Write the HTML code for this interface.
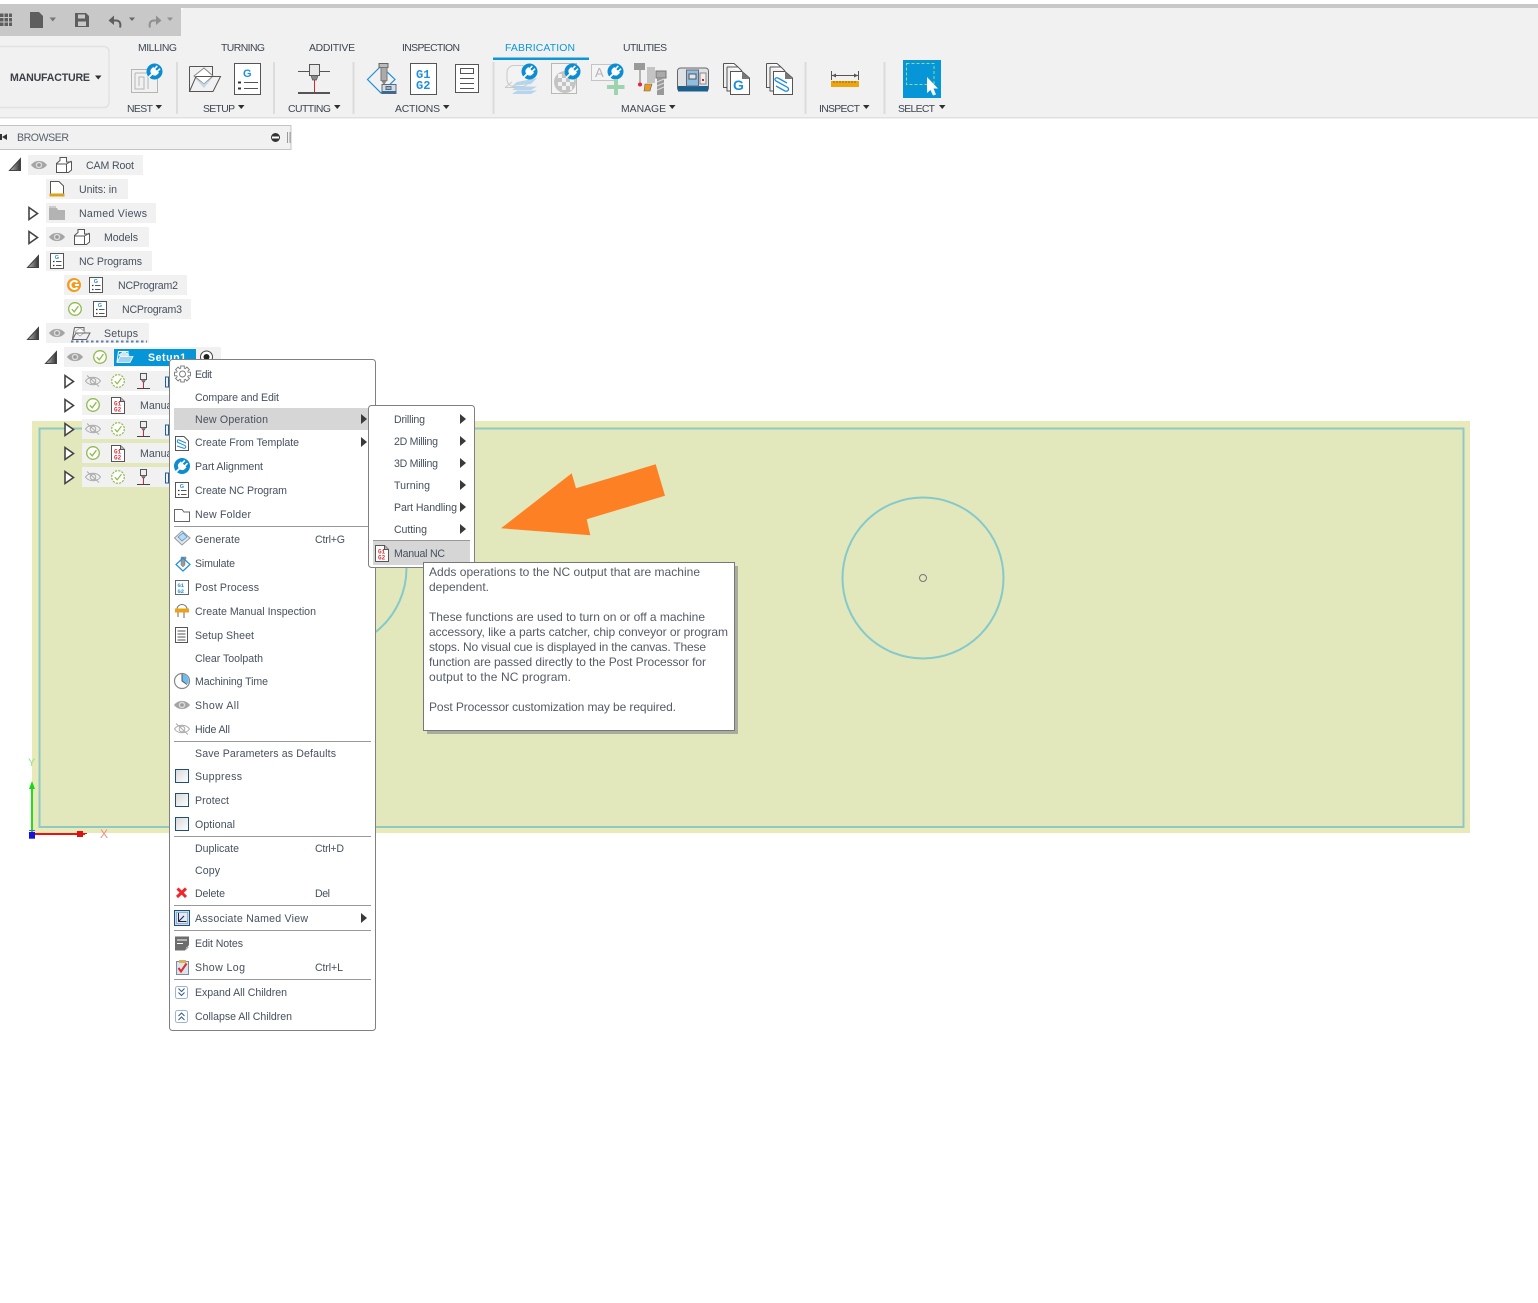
<!DOCTYPE html>
<html><head><meta charset="utf-8"><style>
html,body{margin:0;padding:0;background:#fff;overflow:hidden}
svg{display:block}
text{font-family:"Liberation Sans",Arial,sans-serif;font-size:10.6px;fill:#46505e}
.tab{font-size:10.4px;fill:#3d4550}
.tip{font-size:12px;fill:#555b66}
.gc{font-family:"Liberation Mono",monospace;font-weight:bold;fill:#d8333a}
.gb{font-family:"Liberation Mono",monospace;font-weight:bold;fill:#1f8fdc}
</style></head><body>
<svg xmlns="http://www.w3.org/2000/svg" width="1538" height="1303" viewBox="0 0 1538 1303">
<defs>
<linearGradient id="tg" x1="0" y1="0" x2="1" y2="0"><stop offset="0" stop-color="#bbb"/><stop offset="1" stop-color="#333"/></linearGradient>
<linearGradient id="cb" x1="0" y1="0" x2="1" y2="1"><stop offset="0" stop-color="#d8d8d8"/><stop offset="1" stop-color="#fff"/></linearGradient>
<g id="to"><path d="M0.5 12.5H11.5V0.5Z" fill="url(#tg)" stroke="#444"/></g>
<g id="tc"><path d="M1 0.5L9.5 6.5L1 12.5Z" fill="#fff" stroke="#444" stroke-width="1.6"/></g>
<g id="eye"><path d="M0 6C4 0.5 12 0.5 16 6C12 11.5 4 11.5 0 6Z" fill="#a5a5a5"/><circle cx="8" cy="6" r="3.2" fill="#dcdcdc"/><circle cx="8" cy="6" r="1.8" fill="#999"/></g>
<g id="eyeoff" fill="none" stroke="#aaa"><path d="M0.5 6C4 1 12 1 15.5 6C12 11 4 11 0.5 6Z"/><circle cx="8" cy="6" r="2.8"/><path d="M2 0.5L14 11.5"/></g>
<g id="chk"><circle cx="7" cy="7" r="6.3" fill="#fff" stroke="#8fbb4a" stroke-width="1.3"/><path d="M3.8 7.2L6.2 9.8L10.4 4.2" fill="none" stroke="#8fbb4a" stroke-width="1.3"/></g>
<g id="chkd"><circle cx="7" cy="7" r="6.3" fill="#fff" stroke="#8fbb4a" stroke-width="1.2" stroke-dasharray="2.2 1.1"/><path d="M3.8 7.2L6.2 9.8L10.4 4.2" fill="none" stroke="#8fbb4a" stroke-width="1.2"/></g>
<g id="tool"><rect x="3.5" y="0.5" width="6" height="6" fill="#eee" stroke="#555"/><path d="M4.5 6.5L5.5 9H7.5L8.5 6.5Z" fill="#888" stroke="#555" stroke-width=".6"/><path d="M6.5 9V15" stroke="#d23" stroke-width="1"/><path d="M0 15.5H13" stroke="#444" stroke-width="1"/></g>
<g id="cube" fill="#fff" stroke="#555"><path d="M0.5 15.5V6.5L4 3.5V0.5H10.5V5H15.5V13L12.500 15.5Z"/><path d="M.5 7H10.5V15.5M10.5 7L15.5 4" fill="none"/></g>
<g id="nc"><rect x=".5" y=".5" width="13" height="15" fill="#fff" stroke="#555"/><text x="4.7" y="5.8" style="font-size:5.5px;font-weight:bold;fill:#1f8fdc">G</text><path d="M3 8.5H4.5M3 12.5H4.5" stroke="#333" stroke-width="1.2"/><path d="M6 8.5H11.5M6 12.5H11.5" stroke="#555"/></g>
<g id="mn"><path d="M.5 .5H9.5L13.5 4.5V16.5H.5Z" fill="#fff" stroke="#555"/><path d="M9.5 .5V4.5H13.5" fill="#bbb" stroke="#555"/><text x="3" y="8.3" class="gc" style="font-size:6px">G1</text><text x="3" y="14.3" class="gc" style="font-size:6px">G2</text></g>
<g id="plug"><circle cx="8.5" cy="8.5" r="8" fill="#0b8dd3"/><g transform="rotate(45 8.5 8.5)" fill="#fff"><rect x="5.8" y="2.6" width="1.6" height="4"/><rect x="9.6" y="2.6" width="1.6" height="4"/><path d="M4.4 6.2H12.6V8.6C12.6 11 10.8 12.4 8.5 12.4C6.2 12.4 4.4 11 4.4 8.6Z"/><rect x="7.6" y="12" width="1.8" height="5.2"/></g></g>
<g id="cb0"><rect x=".5" y=".5" width="13" height="13" fill="url(#cb)" stroke="#1e4f80"/></g>
<g id="arr"><path d="M0 0L6 5L0 10Z" fill="#3a3a3a"/></g>
<g id="dn"><path d="M0 0H6.500L3.250 4Z" fill="#2f2f2f"/></g>
</defs>

<!-- ribbon -->
<rect width="1538" height="4" fill="#fff"/>
<rect y="4" width="1538" height="4" fill="#c8c8c8"/>
<rect y="8" width="181" height="28" fill="#c8c8c8"/>
<path d="M181 36V12Q181 8 185 8H1538V118H0V36Z" fill="#f1f1f1"/>
<rect y="117" width="1538" height="1.500" fill="#e0e0e0"/>

<!-- quick access -->
<g fill="#5e5e5e">
<path d="M0 13.500h3.500v3.500h-3.500zM4.500 13.500h3.500v3.500h-3.500zM9 13.500h3v3.500h-3zM0 18h3.500v3.500h-3.500zM4.500 18h3.500v3.500h-3.500zM9 18h3v3.500h-3zM0 22.500h3.500v3.500h-3.500zM4.500 22.500h3.500v3.500h-3.500zM9 22.500h3v3.500h-3z"/>
<path d="M30 12H39L43 16V28H30Z"/><path d="M49.500 17.500H56L52.800 21.500Z" fill="#777"/>
<path d="M75 13H86L89 16V27H75ZM78 14.500V18.500H85V14.500ZM78 21.500V26H86V21.500Z"/>
<path d="M129 17.500H135L132 21Z" fill="#666"/>
</g>
<path d="M110 20.500H116C120 20.500 121 24 120 27.500" fill="none" stroke="#5e5e5e" stroke-width="2"/><path d="M114 15.500L108.500 20.500L114 25Z" fill="#5e5e5e"/>
<path d="M160 20.500H154C150 20.500 149 24 150 27.500" fill="none" stroke="#8f8f8f" stroke-width="2"/><path d="M156 15.500L161.500 20.500L156 25Z" fill="#8f8f8f"/>
<path d="M167 17.500H173L170 21Z" fill="#909090"/>

<!-- manufacture -->
<rect x="-4" y="46.500" width="113" height="61" rx="5" fill="#f1f1f1" stroke="#e2e2e2" stroke-width="1.500"/>
<text x="10" y="81" textLength="80" style="font-weight:bold;font-size:10.600px;fill:#3a3f48">MANUFACTURE</text>
<use href="#dn" x="95" y="75.500"/>

<!-- tabs -->
<text class="tab" x="138" y="51" textLength="39">MILLING</text>
<text class="tab" x="221" y="51" textLength="44">TURNING</text>
<text class="tab" x="309" y="51" textLength="46">ADDITIVE</text>
<text class="tab" x="402" y="51" textLength="58">INSPECTION</text>
<text class="tab" x="505" y="51" textLength="70" style="fill:#0c96d8">FABRICATION</text>
<text class="tab" x="623" y="51" textLength="44">UTILITIES</text>
<rect x="493" y="57.500" width="96" height="2.500" fill="#0c96d8"/>

<g fill="#dcdcdc">
<rect x="176" y="62" width="2" height="52"/><rect x="273" y="62" width="2" height="52"/><rect x="352.500" y="62" width="2" height="52"/><rect x="492.500" y="62" width="2" height="52"/><rect x="804.500" y="62" width="2" height="52"/><rect x="883.500" y="62" width="2" height="52"/>
</g>

<g class="lbl">
<text class="tab" x="127" y="112" textLength="26">NEST</text><use href="#dn" x="155.500" y="105"/>
<text class="tab" x="203" y="112" textLength="32">SETUP</text><use href="#dn" x="238" y="105"/>
<text class="tab" x="288" y="112" textLength="43">CUTTING</text><use href="#dn" x="334" y="105"/>
<text class="tab" x="395" y="112" textLength="45">ACTIONS</text><use href="#dn" x="443" y="105"/>
<text class="tab" x="621" y="112" textLength="45">MANAGE</text><use href="#dn" x="669" y="105"/>
<text class="tab" x="819" y="112" textLength="41">INSPECT</text><use href="#dn" x="863" y="105"/>
<text class="tab" x="898" y="112" textLength="37">SELECT</text><use href="#dn" x="939" y="105"/>
</g>

<!-- nest -->
<g fill="none" stroke="#b5b5b5" stroke-width="1"><path d="M131.500 69.500H157.500V92.500H131.500ZM135 73H148V89M135 73V89H144V77H139V86"/></g>
<use href="#plug" x="146" y="63"/>
<!-- setup folder -->
<path d="M189.500 66.500H212.500V76" fill="none" stroke="#555"/><path d="M189.500 66.500V91.500" stroke="#555"/>
<path d="M194 76L204 68L213 76L204 84Z" fill="#fff" stroke="#888"/><path d="M194 77L204 84L213 77L204 88Z" fill="#c2d8ea"/>
<path d="M189.500 91.500L196 76.500H220.500L213 91.500Z" fill="none" stroke="#555"/>
<!-- G doc -->
<rect x="234.500" y="63.500" width="26" height="31" fill="#fff" stroke="#555"/>
<text x="243" y="77" style="font-size:11px;font-weight:bold;fill:#1f8fdc">G</text>
<path d="M238 82.500H241M238 88.500H241" stroke="#333" stroke-width="2"/><path d="M244 82.500H258M244 88.500H258" stroke="#555"/>
<!-- cutting -->
<path d="M298 71.500H330" stroke="#555"/>
<rect x="309.500" y="64.500" width="10" height="11" fill="#e8e8e8" stroke="#555"/>
<path d="M311 75.500L312.500 80H316.500L318 75.500Z" fill="#888" stroke="#555" stroke-width=".7"/>
<path d="M314.500 80V92" stroke="#d8262c"/><path d="M298 93H330" stroke="#555" stroke-width="2"/>
<!-- actions -->
<path d="M381 66L367.500 79.500L381 93L395 79.500Z" fill="none" stroke="#1f8fdc" stroke-width="1.200"/>
<rect x="379" y="63.500" width="9" height="4" fill="#bbb" stroke="#666"/><rect x="381" y="67.500" width="6" height="13" fill="#aaa" stroke="#777"/><path d="M381 80.500L384 85L387 80.500Z" fill="#888"/>
<rect x="382" y="84.500" width="14" height="9" fill="#d3dde5" stroke="#667"/><rect x="382" y="91" width="14" height="2.500" fill="#3a6a94"/><rect x="386" y="86.500" width="5" height="3" fill="#8cb6d8" stroke="#567"/>
<rect x="410.500" y="63.500" width="26" height="31" fill="#fff" stroke="#555"/>
<text x="416" y="78" class="gb" style="font-size:12px">G1</text><text x="416" y="89" class="gb" style="font-size:12px">G2</text>
<rect x="455.500" y="64.500" width="23" height="28" fill="#fff" stroke="#555"/><rect x="460.500" y="68.500" width="13" height="5" fill="none" stroke="#555"/>
<path d="M460 78.500H474M460 83.500H474M460 88.500H474" stroke="#555"/>
<!-- manage -->
<rect x="507" y="65.500" width="22" height="21" rx="7" fill="#f3f3f3" stroke="#c9c9c9"/><path d="M505 87.500L512 82" stroke="#c9c9c9"/><path d="M505 87.500H520" stroke="#c9c9c9"/>
<path d="M517 82L537 78L531 84L512 86Z M517 86.500H537L531 90H512Z M517 90.500H537L531 94H512Z" fill="#b7d5ea"/>
<use href="#plug" x="521" y="63"/>
<rect x="551.500" y="63.500" width="25" height="30" fill="#f4f4f4" stroke="#b8b8b8"/>
<circle cx="565" cy="82" r="11" fill="#c4c4c4"/><path d="M558 74h4v4h-4zM566 74h4v4h-4zM562 78h4v4h-4zM570 78h4v4h-4zM558 82h4v4h-4zM566 82h4v4h-4zM562 86h4v4h-4zM570 86h2v4h-2z" fill="#f1f1f1"/>
<use href="#plug" x="564" y="63"/>
<rect x="591.500" y="64.500" width="24" height="16" fill="#f4f4f4" stroke="#c4c4c4"/>
<text x="595" y="77" style="font-size:13px;fill:#b5b5b5">A</text>
<use href="#plug" x="607" y="63"/>
<path d="M614 79h4v6h6.500v4H618v6h-4v-6h-7v-4h7z" fill="#9dd3ad"/>
<rect x="634" y="63" width="11" height="7" fill="#9a9a9a"/><path d="M640 70V83" stroke="#777"/><circle cx="640" cy="84.500" r="2" fill="#ee2233"/>
<rect x="647" y="67" width="8" height="16" fill="#c4c4c4"/>
<rect x="656" y="71" width="10" height="7" fill="#aaa" stroke="#777"/><rect x="657" y="78" width="7" height="17" fill="#999"/><path d="M657 82l7-3M657 86l7-3M657 90l7-3" stroke="#ddd"/>
<path d="M645 84L652 84L650 91H644Z" fill="#e89a1e" stroke="#666" stroke-width=".6"/>
<rect x="677.500" y="68" width="31" height="23" rx="3" fill="#dfe2e5" stroke="#666"/><rect x="678" y="86" width="30" height="5.500" fill="#1c5f8c"/>
<rect x="686.500" y="70" width="12" height="16" fill="#8fbde0" stroke="#667"/><rect x="689" y="74" width="7" height="5" fill="#dbe8f2" stroke="#555"/>
<rect x="700" y="73" width="6" height="11" fill="#eee" stroke="#888"/><rect x="702" y="79" width="2" height="2" fill="#c22"/>
<path d="M723.500 63.500H734L738 67M727 67H738L742 71M730.500 71.500H742L749.500 78V94.500H730.500Z" fill="#fff" stroke="#555"/><path d="M723.500 63.500V87.500H727M727 67V91H730.500" fill="none" stroke="#555"/>
<path d="M742 71.500L749.500 79H742Z" fill="#777"/>
<text x="733" y="90" style="font-size:14px;font-weight:bold;fill:#1f8fdc">G</text>
<path d="M766.500 63.500H777L781 67M770 67H781L785 71M773.500 71.500H785L792.500 78V94.500H773.500Z" fill="#fff" stroke="#555"/><path d="M766.500 63.500V87.500H770M770 67V91H773.500" fill="none" stroke="#555"/>
<path d="M785 71.500L792.500 79H785Z" fill="#777"/>
<path d="M787 83L778 78C775 77 774 80 776 81L787 87C790 89 788 92 785 91L776 86" fill="none" stroke="#1f8fdc" stroke-width="1.300"/>
<!-- inspect -->
<path d="M831.500 71V80M858.500 71V80M832 75.500H858" stroke="#555"/><path d="M832 75.500L836 73.500V77.500ZM858 75.500L854 73.500V77.500Z" fill="#555"/>
<rect x="831" y="81" width="28" height="6" fill="#eea40f"/><path d="M834 81v2M837 81v2M840 81v2M843 81v2M846 81v2M849 81v2M852 81v2M855 81v2" stroke="#8c6a10"/>
<!-- select -->
<rect x="903" y="60" width="38" height="38" fill="#0696d7"/>
<rect x="906.500" y="63.500" width="27.500" height="21" fill="none" stroke="#8fe08f" stroke-dasharray="3 2"/>
<path d="M927 77V93L930.500 90L933 95.500L936 94.500L933.500 88.500H938Z" fill="#fff"/>

<!-- canvas -->
<rect x="32" y="421" width="1438" height="412" fill="#e8ebb9"/>
<rect x="39.500" y="428.500" width="1424" height="398.500" fill="#e2e8bc" stroke="#8ec9c6" stroke-width="2"/>
<circle cx="923" cy="578" r="80.500" fill="none" stroke="#85c9cb" stroke-width="2"/>
<circle cx="923" cy="578" r="3.500" fill="#e2e8bc" stroke="#777"/>
<path d="M406 560A81 81 0 0 1 373 634" fill="none" stroke="#85c9cb" stroke-width="2"/>
<!-- axis -->
<path d="M32 833V786" stroke="#1fe01f" stroke-width="2"/><path d="M32 781L35 789H29Z" fill="#17d817"/>
<path d="M32 834H85" stroke="#ee1111" stroke-width="2"/><path d="M84 833.500H87" stroke="#ee1111"/><rect x="77" y="831" width="6" height="6" fill="#e01010"/>
<path d="M29 832H35V838H29Z" fill="#1414d8"/><path d="M29 830.500H35M29 838.500H35" stroke="#5a5aee"/>
<text x="28" y="766" style="font-size:11px;fill:#8fe08f">Y</text>
<text x="100" y="838" style="font-size:12px;fill:#f08a8a">X</text>

<!-- browser -->
<rect x="-2" y="125.500" width="293" height="24" fill="#f1f1f1" stroke="#c4c4c4"/>
<path d="M0 134H2V140H0ZM2 137L7 134V140Z" fill="#333"/>
<text x="17" y="141" textLength="52" style="fill:#59606c">BROWSER</text>
<circle cx="275.500" cy="137.500" r="4.500" fill="#333"/><rect x="272" y="136.500" width="7" height="2" fill="#fff"/>
<path d="M287.500 132V143M290 132V143" stroke="#999"/>

<g fill="#f1f1f1">
<rect x="28" y="155" width="115" height="20"/>
<rect x="46" y="179" width="82" height="20"/>
<rect x="46" y="203" width="110" height="20"/>
<rect x="46" y="227" width="103" height="20"/>
<rect x="46" y="251" width="106" height="20"/>
<rect x="64" y="275" width="123" height="20"/>
<rect x="64" y="299" width="127" height="20"/>
<rect x="46" y="323" width="103" height="20"/>
<rect x="64" y="347" width="157" height="20"/>
<rect x="82" y="371" width="100" height="20"/>
<rect x="82" y="395" width="100" height="20"/>
<rect x="82" y="419" width="100" height="20"/>
<rect x="82" y="443" width="100" height="20"/>
<rect x="82" y="467" width="100" height="20"/>
</g>

<use href="#to" x="9" y="158"/><use href="#eye" x="31" y="159"/><use href="#cube" x="56" y="157"/>
<text x="86" y="169" textLength="48">CAM Root</text>

<path d="M50.500 181.500H59L63.500 186V195.500H50.500Z" fill="#fff" stroke="#555"/><rect x="49.500" y="193.500" width="15" height="3" fill="#dba21c"/>
<text x="79" y="193" textLength="38">Units: in</text>

<use href="#tc" x="28" y="207"/>
<path d="M49 208H57L58 210H65V220H49Z" fill="#b3b3b3"/><rect x="49" y="206" width="7" height="2" fill="#ccc"/>
<text x="79" y="217" textLength="68">Named Views</text>

<use href="#tc" x="28" y="231"/><use href="#eye" x="49" y="231"/><use href="#cube" x="74" y="229"/>
<text x="104" y="241" textLength="34">Models</text>

<use href="#to" x="27" y="255"/><use href="#nc" x="50" y="253"/>
<text x="79" y="265" textLength="63">NC Programs</text>

<circle cx="74" cy="285" r="7" fill="#f59a1e"/><path d="M77.500 282.500A4 4 0 1 0 77.500 287.500" fill="none" stroke="#fff" stroke-width="2"/><path d="M75 284H79V286H75Z" fill="#fff"/>
<use href="#nc" x="89" y="277"/>
<text x="118" y="289" textLength="60">NCProgram2</text>

<use href="#chk" x="68" y="302"/><use href="#nc" x="93" y="301"/>
<text x="122" y="313" textLength="60">NCProgram3</text>

<use href="#to" x="27" y="327"/><use href="#eye" x="49" y="327"/>
<path d="M74.500 327.500H84V333M74.500 327.500L72.500 339" fill="none" stroke="#666"/>
<path d="M75 332L80 328L85 332L80 336Z" fill="#fff" stroke="#999" stroke-width=".7"/>
<path d="M72.500 339.500L76 333H90L86.500 339.500Z" fill="none" stroke="#666"/>
<path d="M71 341.500H147" stroke="#5f7ea4" stroke-width="2" stroke-dasharray="2.500 2.500"/>
<text x="104" y="337" textLength="34">Setups</text>

<use href="#to" x="45" y="351"/><use href="#eye" x="67" y="351"/><use href="#chk" x="93" y="350"/>
<rect x="114" y="349" width="82" height="17" fill="#0696d7"/>
<path d="M118.500 351.500H128V356M118.500 351.500L117 362" fill="none" stroke="#fff"/>
<path d="M119 355L124 351L129 355L124 359Z" fill="#cfe6f6" stroke="#fff" stroke-width=".6"/>
<path d="M117 362.500L120 356.500H133L130 362.500Z" fill="#9fd2f0" stroke="#fff" stroke-width=".8"/>
<text x="148" y="361" textLength="38" style="font-weight:bold;fill:#fff">Setup1</text>
<circle cx="206.500" cy="357" r="6" fill="#fff" stroke="#444"/><circle cx="206.500" cy="357" r="3" fill="#222"/>

<use href="#tc" x="64" y="375"/><use href="#eyeoff" x="85" y="375"/><use href="#chkd" x="111" y="374"/><use href="#tool" x="137" y="373"/><rect x="165.500" y="377" width="3" height="10" fill="none" stroke="#1e5f9a"/>
<use href="#tc" x="64" y="399"/><use href="#chk" x="86" y="398"/><use href="#mn" x="111" y="397"/><text x="140" y="409">Manual</text>
<use href="#tc" x="64" y="423"/><use href="#eyeoff" x="85" y="423"/><use href="#chkd" x="111" y="422"/><use href="#tool" x="137" y="421"/><rect x="165.500" y="425" width="3" height="10" fill="none" stroke="#1e5f9a"/>
<use href="#tc" x="64" y="447"/><use href="#chk" x="86" y="446"/><use href="#mn" x="111" y="445"/><text x="140" y="457">Manual</text>
<use href="#tc" x="64" y="471"/><use href="#eyeoff" x="85" y="471"/><use href="#chkd" x="111" y="470"/><use href="#tool" x="137" y="469"/><rect x="165.500" y="473" width="3" height="10" fill="none" stroke="#1e5f9a"/>

<!-- context menu -->
<rect x="169.500" y="359.500" width="206" height="671" rx="3" fill="#fff" stroke="#808080"/>
<rect x="174" y="408" width="194" height="22" fill="#d6d6d6"/>
<g stroke="#999"><path d="M174 526.500H371M174 741.500H371M174 836.500H371M174 905.500H371M174 930.500H371M174 979.500H371"/></g>

<text x="195" y="378" textLength="17">Edit</text>
<text x="195" y="401" textLength="84">Compare and Edit</text>
<text x="195" y="423" textLength="73">New Operation</text>
<text x="195" y="446" textLength="104">Create From Template</text>
<text x="195" y="470" textLength="68">Part Alignment</text>
<text x="195" y="494" textLength="92">Create NC Program</text>
<text x="195" y="518" textLength="56">New Folder</text>
<text x="195" y="543" textLength="45">Generate</text><text x="315" y="543" textLength="30">Ctrl+G</text>
<text x="195" y="567" textLength="40">Simulate</text>
<text x="195" y="591" textLength="64">Post Process</text>
<text x="195" y="615" textLength="121">Create Manual Inspection</text>
<text x="195" y="639" textLength="59">Setup Sheet</text>
<text x="195" y="662" textLength="68">Clear Toolpath</text>
<text x="195" y="685" textLength="73">Machining Time</text>
<text x="195" y="709" textLength="44">Show All</text>
<text x="195" y="733" textLength="35">Hide All</text>
<text x="195" y="757" textLength="141">Save Parameters as Defaults</text>
<text x="195" y="780" textLength="47">Suppress</text>
<text x="195" y="804" textLength="34">Protect</text>
<text x="195" y="828" textLength="40">Optional</text>
<text x="195" y="852" textLength="44">Duplicate</text><text x="315" y="852" textLength="29">Ctrl+D</text>
<text x="195" y="874" textLength="25">Copy</text>
<text x="195" y="897" textLength="30">Delete</text><text x="315" y="897" textLength="15">Del</text>
<text x="195" y="922" textLength="113">Associate Named View</text>
<text x="195" y="947" textLength="48">Edit Notes</text>
<text x="195" y="971" textLength="50">Show Log</text><text x="315" y="971" textLength="28">Ctrl+L</text>
<text x="195" y="996" textLength="92">Expand All Children</text>
<text x="195" y="1020" textLength="97">Collapse All Children</text>

<use href="#arr" x="361" y="414"/><use href="#arr" x="361" y="437"/><use href="#arr" x="361" y="913"/>

<!-- menu icons -->
<g transform="translate(182.500 374)" fill="#fff" stroke="#777" stroke-width=".9">
<rect x="-1.800" y="-8" width="3.600" height="3.500"/><rect x="-1.800" y="-8" width="3.600" height="3.500" transform="rotate(45)"/><rect x="-1.800" y="-8" width="3.600" height="3.500" transform="rotate(90)"/><rect x="-1.800" y="-8" width="3.600" height="3.500" transform="rotate(135)"/><rect x="-1.800" y="-8" width="3.600" height="3.500" transform="rotate(180)"/><rect x="-1.800" y="-8" width="3.600" height="3.500" transform="rotate(225)"/><rect x="-1.800" y="-8" width="3.600" height="3.500" transform="rotate(270)"/><rect x="-1.800" y="-8" width="3.600" height="3.500" transform="rotate(315)"/>
<circle r="5.500" stroke="none"/><circle r="3"/>
</g>
<path d="M175.500 436.500H184L188.500 441V450.500H175.500Z" fill="#fff" stroke="#555"/><path d="M186 443L179 440C177 439 177 442 178 442.500L185 445.500C187 447 185 449 183 448L177 446" fill="none" stroke="#1f8fdc"/>
<use href="#plug" x="173.500" y="457.500"/>
<use href="#nc" x="175" y="482"/>
<path d="M174.500 509.500H182L184 512H189.500V521.500H174.500Z" fill="#fff" stroke="#666"/>
<path d="M182 531L190 538L182 545L174.500 538Z" fill="#e6e6e6" stroke="#999"/><path d="M178 537L183 533L187 537L182 541Z" fill="#bcd9ef" stroke="#3a92d8" stroke-width=".7"/>
<path d="M181 557H186V559H185V565L183 567L181 565V559Z" fill="#999" stroke="#777" stroke-width=".5"/><path d="M183 558L176 564.500L183 571L190 564.500Z" fill="none" stroke="#1f8fdc" stroke-width="1.200"/>
<rect x="175.500" y="580.500" width="13" height="14" fill="#fff" stroke="#666"/><text x="177.500" y="586.800" class="gb" style="font-size:5.500px">G1</text><text x="177.500" y="592.800" class="gb" style="font-size:5.500px">G2</text>
<path d="M177 609A5 4.500 0 0 1 187 609" fill="none" stroke="#777"/><rect x="175" y="608.500" width="14" height="4" fill="#eaa317"/><path d="M178 612.500V617M184 612.500V618" stroke="#666"/>
<rect x="175.500" y="627.500" width="12" height="15" fill="#fff" stroke="#555"/><path d="M177.500 631H185.500M177.500 634H185.500M177.500 637H185.500M177.500 640H185.500" stroke="#555"/>
<circle cx="182" cy="681" r="7.500" fill="#fff" stroke="#888" stroke-width="1.200"/><path d="M182 681V674A7 7 0 0 1 188 684Z" fill="#6bbcf2"/><path d="M182 674V681L187 684.500" fill="none" stroke="#555"/>
<use href="#eye" x="174" y="699"/><use href="#eyeoff" x="174" y="723"/>
<use href="#cb0" x="175" y="769"/><use href="#cb0" x="175" y="793"/><use href="#cb0" x="175" y="817"/>
<path d="M177.500 888.500L186 897" stroke="#f0262c" stroke-width="3"/><path d="M186 888.500L177 897" stroke="#f0262c" stroke-width="3"/>
<rect x="174.500" y="910.500" width="15" height="15" fill="#c9dcec" stroke="#1e4f80"/><rect x="176.500" y="912.500" width="11" height="11" fill="#e1ebf4" stroke="#6d90ae" stroke-width=".6"/><path d="M178.500 913V921.500H186.500M179 921L184 916" fill="none" stroke="#224" stroke-width="1"/>
<path d="M175 936.500H189V945L185 950.500H175Z" fill="#6d6d6d"/><path d="M177 940H187M177 943.500H183" stroke="#fff"/><path d="M186 947H189L186 950Z" fill="#aaa"/>
<rect x="176.500" y="961.500" width="12" height="13" fill="#dbe3ee" stroke="#7c8ba0"/><rect x="179" y="960" width="7" height="3" fill="#d9b15a"/><path d="M178.500 968L181 971.500L186.500 963.500" fill="none" stroke="#dc2d2d" stroke-width="2"/>
<g fill="none" stroke="#2c5a90"><rect x="175.500" y="986.500" width="12" height="12" rx="2" stroke="#9db4cc"/><path d="M178.500 988.500L181.500 991.500L184.500 988.500M178.500 992.500L181.500 995.500L184.500 992.500"/>
<rect x="175.500" y="1010.500" width="12" height="12" rx="2" stroke="#9db4cc"/><path d="M178.500 1016L181.500 1013L184.500 1016M178.500 1020L181.500 1017L184.500 1020"/></g>

<!-- submenu -->
<rect x="368.500" y="405.500" width="106" height="162" rx="3" fill="#fff" stroke="#808080"/>
<rect x="373" y="541" width="97" height="24" fill="#d6d6d6"/>
<path d="M373 540.500H470" stroke="#999"/>
<text x="394" y="423" textLength="31">Drilling</text><use href="#arr" x="460" y="414"/>
<text x="394" y="445" textLength="44">2D Milling</text><use href="#arr" x="460" y="436"/>
<text x="394" y="467" textLength="44">3D Milling</text><use href="#arr" x="460" y="458"/>
<text x="394" y="489" textLength="36">Turning</text><use href="#arr" x="460" y="480"/>
<text x="394" y="511" textLength="63">Part Handling</text><use href="#arr" x="460" y="502"/>
<text x="394" y="533" textLength="33">Cutting</text><use href="#arr" x="460" y="524"/>
<text x="394" y="557" textLength="51">Manual NC</text><use href="#mn" x="375" y="545"/>

<!-- orange arrow -->
<path d="M501 528.300L571.700 473.300L576 488.300L655.700 464.300L665 495.700L586.700 519.300L590.300 535.300Z" fill="#fe8024"/>

<!-- tooltip -->
<rect x="427" y="566" width="311" height="168" fill="#8a8a8a" opacity=".65"/>
<rect x="423.500" y="562.500" width="311" height="168" fill="#fff" stroke="#777"/>
<text class="tip" x="429" y="576" textLength="271">Adds operations to the NC output that are machine</text>
<text class="tip" x="429" y="591" textLength="60">dependent.</text>
<text class="tip" x="429" y="621" textLength="276">These functions are used to turn on or off a machine</text>
<text class="tip" x="429" y="636" textLength="299">accessory, like a parts catcher, chip conveyor or program</text>
<text class="tip" x="429" y="651" textLength="277">stops. No visual cue is displayed in the canvas. These</text>
<text class="tip" x="429" y="666" textLength="277">function are passed directly to the Post Processor for</text>
<text class="tip" x="429" y="681" textLength="142">output to the NC program.</text>
<text class="tip" x="429" y="711" textLength="247">Post Processor customization may be required.</text>
</svg>
</body></html>
